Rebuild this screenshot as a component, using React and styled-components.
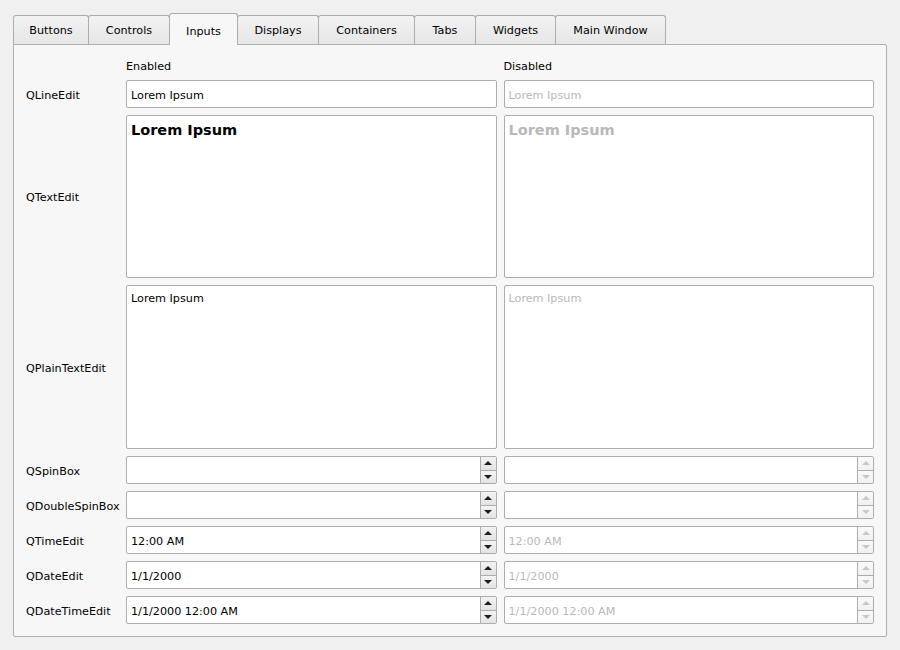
import styled, { createGlobalStyle, css } from 'styled-components'

const GlobalStyle = createGlobalStyle`
    html, body {
        margin: 0;
        padding: 0;
        background: #f0f0f0;
        font-family: "DejaVu Sans", Verdana, sans-serif;
        font-size: 11.2px;
        color: #000;
    }
`

const Window = styled.div`
    width: 900px;
    height: 650px;
    box-sizing: border-box;
    padding: 13px 13px 0 13px;
    background: #f0f0f0;
`

const TabBar = styled.div`
    display: flex;
    align-items: flex-end;
    height: 31px;
    position: relative;
    z-index: 2;
`

const Tab = styled.div`
    box-sizing: border-box;
    width: ${p => p.$w}px;
    height: 29px;
    margin-left: -1px;
    display: flex;
    align-items: center;
    justify-content: center;
    padding-top: 1px;
    border: 1px solid #acacac;
    border-bottom: none;
    border-radius: 3px 3px 0 0;
    background: linear-gradient(#f2f2f2, #e6e6e6);
    white-space: nowrap;

    &:first-child {
        margin-left: 0;
    }

    ${p => p.$active && css`
        height: 32px;
        margin-bottom: -1px;
        padding-top: 4px;
        background: #f7f7f7;
        position: relative;
        z-index: 3;
    `}
`

const Pane = styled.div`
    box-sizing: border-box;
    width: 874px;
    height: 593px;
    border: 1px solid #b0b0b0;
    border-radius: 0 2px 2px 2px;
    background: #f7f7f7;
    padding: 14px 12px 0 12px;
    display: grid;
    grid-template-columns: 93px 1fr 1fr;
    grid-template-rows: 14px 28px 163px 164px repeat(5, 28px);
    column-gap: 7px;
    row-gap: 7px;
`

const Label = styled.div`
    display: flex;
    align-items: center;
    padding-top: 2px;
    white-space: nowrap;
`

const Head = styled.div`
    display: flex;
    align-items: center;
`

const Box = styled.div`
    box-sizing: border-box;
    position: relative;
    border: 1px solid #adadad;
    border-radius: 2px;
    background: #fff;
    color: ${p => (p.$off ? '#b9b9b9' : '#000')};
    display: flex;
    align-items: ${p => (p.$area ? 'flex-start' : 'center')};
    padding: ${p => (p.$area ? '5px 4px' : '2px 4px 0 4px')};
    overflow: hidden;
    white-space: nowrap;
`

const Bold = styled.div`
    font-weight: bold;
    font-size: 14.5px;
    margin-top: 1px;
`

const Plain = styled.div`
    margin-top: 1px;
`

const Spinner = styled.div`
    position: absolute;
    top: 0;
    right: 0;
    bottom: 0;
    width: 15px;
    border-left: 1px solid #adadad;
    display: flex;
    flex-direction: column;
`

const SpinBtn = styled.div`
    flex: 1;
    display: flex;
    align-items: center;
    justify-content: center;
    background: ${p => (p.$off ? 'linear-gradient(#f9f9f9, #f1f1f1)' : 'linear-gradient(#f3f3f3, #e3e3e3)')};
    border-top: ${p => (p.$down ? '1px solid #adadad' : 'none')};
`

const Arrow = styled.div`
    width: 0;
    height: 0;
    border-left: 4px solid transparent;
    border-right: 4px solid transparent;
    ${p => (p.$down
        ? `border-top: 4px solid ${p.$off ? '#c8c8c8' : '#1e1e1e'};`
        : `border-bottom: 4px solid ${p.$off ? '#c8c8c8' : '#1e1e1e'};`)}
`

const tabs = [
    ['Buttons', 76],
    ['Controls', 82],
    ['Inputs', 69],
    ['Displays', 82],
    ['Containers', 97],
    ['Tabs', 62],
    ['Widgets', 81],
    ['Main Window', 111],
]

function Spin({ value, off }) {
    return (
        <Box $off={off}>
            {value}
            <Spinner>
                <SpinBtn $off={off}><Arrow $off={off} /></SpinBtn>
                <SpinBtn $off={off} $down><Arrow $off={off} $down /></SpinBtn>
            </Spinner>
        </Box>
    )
}

const spins = [
    ['QSpinBox', ''],
    ['QDoubleSpinBox', ''],
    ['QTimeEdit', '12:00 AM'],
    ['QDateEdit', '1/1/2000'],
    ['QDateTimeEdit', '1/1/2000 12:00 AM'],
]

export default function App() {
    return (
        <>
            <GlobalStyle />
            <Window>
                <TabBar>
                    {tabs.map(([name, w]) => (
                        <Tab key={name} $w={w} $active={name === 'Inputs'}>{name}</Tab>
                    ))}
                </TabBar>
                <Pane>
                    <div />
                    <Head>Enabled</Head>
                    <Head>Disabled</Head>

                    <Label>QLineEdit</Label>
                    <Box>Lorem Ipsum</Box>
                    <Box $off>Lorem Ipsum</Box>

                    <Label>QTextEdit</Label>
                    <Box $area><Bold>Lorem Ipsum</Bold></Box>
                    <Box $area $off><Bold>Lorem Ipsum</Bold></Box>

                    <Label>QPlainTextEdit</Label>
                    <Box $area><Plain>Lorem Ipsum</Plain></Box>
                    <Box $area $off><Plain>Lorem Ipsum</Plain></Box>

                    {spins.map(([name, value]) => (
                        <>
                            <Label key={name}>{name}</Label>
                            <Spin value={value} />
                            <Spin value={value} off />
                        </>
                    ))}
                </Pane>
            </Window>
        </>
    )
}
